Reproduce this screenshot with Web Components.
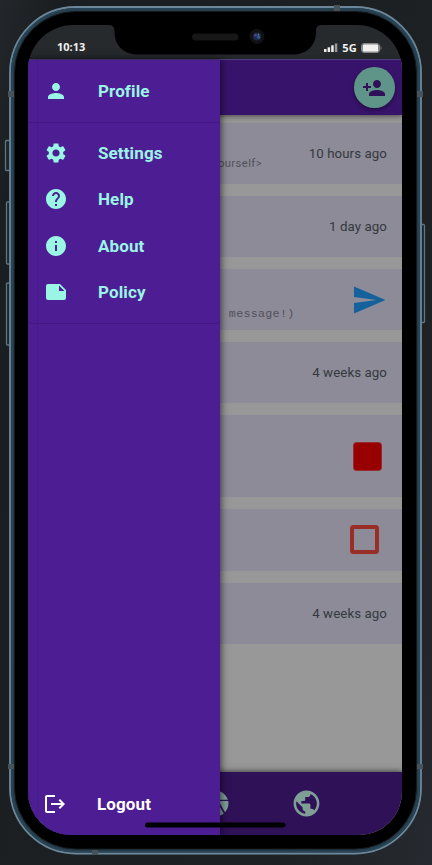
<!DOCTYPE html>
<html lang="en">
<head>
<meta charset="utf-8">
<title>Messages</title>
<style>
html,body{margin:0;width:432px;height:865px;overflow:hidden}
body{background:linear-gradient(105deg,#23272b 0,#1a1e20 9%,#1d2123 75%,#26292f 100%);font-family:Roboto,sans-serif}
</style>
</head>
<body>
<phone-frame>
  <status-bar slot="status"></status-bar>
  <app-header></app-header>
  <message-list>
    <message-row note="yourself&gt;">10 hours ago</message-row>
    <message-row>1 day ago</message-row>
    <message-row mono note="message!)"><ui-icon name="send" style="--size:36px;color:#14619c"></ui-icon></message-row>
    <message-row>4 weeks ago</message-row>
    <message-row style="--height:82px;--end:20px"><state-box filled></state-box></message-row>
    <message-row style="--end:23px;--height:62px"><state-box></state-box></message-row>
    <message-row>4 weeks ago</message-row>
  </message-list>
  <bottom-nav></bottom-nav>
  <side-drawer slot="drawer">
    <drawer-item slot="head" icon="person">Profile</drawer-item>
    <drawer-item icon="settings">Settings</drawer-item>
    <drawer-item icon="help">Help</drawer-item>
    <drawer-item icon="info">About</drawer-item>
    <drawer-item icon="note">Policy</drawer-item>
    <drawer-item slot="foot" icon="logout" style="color:#fff">Logout</drawer-item>
  </side-drawer>
</phone-frame>
<script>
const ICONS={
person:'M12 12c2.21 0 4-1.79 4-4s-1.79-4-4-4-4 1.79-4 4 1.79 4 4 4zm0 2c-2.67 0-8 1.34-8 4v2h16v-2c0-2.66-5.33-4-8-4z',
add:'M15 12c2.21 0 4-1.79 4-4s-1.79-4-4-4-4 1.79-4 4 1.79 4 4 4zm-9-2V7H4v3H1v2h3v3h2v-3h3v-2H6zm9 4c-2.67 0-8 1.34-8 4v2h16v-2c0-2.66-5.33-4-8-4z',
settings:'M19.14 12.94c.04-.3.06-.61.06-.94 0-.32-.02-.64-.07-.94l2.03-1.58c.18-.14.23-.41.12-.61l-1.92-3.32c-.12-.22-.37-.29-.59-.22l-2.39.96c-.5-.38-1.03-.7-1.62-.94l-.36-2.54c-.04-.24-.24-.41-.48-.41h-3.84c-.24 0-.43.17-.47.41l-.36 2.54c-.59.24-1.13.57-1.62.94l-2.39-.96c-.22-.08-.47 0-.59.22L2.74 8.87c-.12.21-.08.47.12.61l2.03 1.58c-.05.3-.09.63-.09.94s.02.64.07.94l-2.03 1.58c-.18.14-.23.41-.12.61l1.92 3.32c.12.22.37.29.59.22l2.39-.96c.5.38 1.03.7 1.62.94l.36 2.54c.05.24.24.41.48.41h3.84c.24 0 .44-.17.47-.41l.36-2.54c.59-.24 1.13-.56 1.62-.94l2.39.96c.22.08.47 0 .59-.22l1.92-3.32c.12-.22.07-.47-.12-.61l-2.01-1.58zM12 15.6c-1.98 0-3.6-1.62-3.6-3.6s1.62-3.6 3.6-3.6 3.6 1.62 3.6 3.6-1.62 3.6-3.6 3.6z',
help:'M12 2C6.48 2 2 6.48 2 12s4.48 10 10 10 10-4.48 10-10S17.52 2 12 2zm1 17h-2v-2h2v2zm2.07-7.75l-.9.92C13.45 12.9 13 13.5 13 15h-2v-.5c0-1.1.45-2.1 1.17-2.83l1.24-1.26c.37-.36.59-.86.59-1.41 0-1.1-.9-2-2-2s-2 .9-2 2H8c0-2.21 1.79-4 4-4s4 1.79 4 4c0 .88-.36 1.68-.93 2.25z',
info:'M12 2C6.48 2 2 6.48 2 12s4.48 10 10 10 10-4.48 10-10S17.52 2 12 2zm1 15h-2v-6h2v6zm0-8h-2V7h2v2z',
note:'M22 10l-6-6H4c-1.1 0-2 .9-2 2v12.01c0 1.1.9 1.99 2 1.99l16-.01c1.1 0 2-.89 2-1.99v-8zm-7-4.5l5.5 5.5H15V5.5z',
logout:'M17 7l-1.41 1.41L18.17 11H8v2h10.17l-2.58 2.58L17 17l5-5zM4 5h8V3H4c-1.1 0-2 .9-2 2v14c0 1.1.9 2 2 2h8v-2H4V5z',
send:'M2.01 21L23 12 2.01 3 2 10l15 2-15 2z',
globe:'M12 2C6.48 2 2 6.48 2 12s4.48 10 10 10 10-4.48 10-10S17.52 2 12 2zm-1 17.93c-3.95-.49-7-3.85-7-7.93 0-.62.08-1.21.21-1.79L9 15v1c0 1.1.9 2 2 2v1.93zm6.9-2.54c-.26-.81-1-1.39-1.9-1.39h-1v-3c0-.55-.45-1-1-1H8v-2h2c.55 0 1-.45 1-1V7h2c1.1 0 2-.9 2-2v-.41c2.93 1.19 5 4.06 5 7.41 0 2.08-.8 3.97-2.1 5.39z',
aperture:'M9.4 10.5l4.77-8.26C13.47 2.09 12.75 2 12 2c-2.4 0-4.6.85-6.32 2.25l3.66 6.35.06-.1zM21.54 9c-.92-2.92-3.15-5.26-6-6.34L11.88 9h9.66zm.26 1h-7.49l.29.5 4.76 8.25C21 16.97 22 14.61 22 12c0-.69-.07-1.35-.2-2zM8.54 12l-3.9-6.75C3.01 7.03 2 9.39 2 12c0 .69.07 1.35.2 2h7.49l-1.15-2zm-6.08 3c.92 2.92 3.15 5.26 6 6.34L12.12 15H2.46zm11.27 0l-3.9 6.76c.7.15 1.42.24 2.17.24 2.4 0 4.6-.85 6.32-2.25l-3.66-6.35-.93 1.6z'
};
function element(name,render){
  customElements.define(name,class extends HTMLElement{
    connectedCallback(){
      if(!this.shadowRoot)this.attachShadow({mode:'open'}).innerHTML=render(this);
    }
  });
}
element('ui-icon',e=>`<style>:host{display:block;flex:none;width:var(--size,24px);height:var(--size,24px)}svg{display:block;width:100%;height:100%;fill:currentColor}</style>
<svg viewBox="0 0 24 24"><path d="${ICONS[e.getAttribute('name')]}"/></svg>`);

element('phone-frame',()=>`<style>
:host{display:block;position:relative;width:432px;height:865px}
.hardware{position:absolute;inset:0}
.screen{position:absolute;left:28px;top:25px;width:374px;height:810px;border-radius:45px 45px 43px 43px;overflow:hidden;display:flex;flex-direction:column;background:#262a2d}
.app{flex:1;min-height:0;display:flex;flex-direction:column;background:#989898}
.top{position:absolute;inset:0;pointer-events:none;z-index:3}
</style>
<svg class="hardware" width="432" height="865">
<g fill="#1b252c" stroke="#5f7581" stroke-width="1.3"><rect x="5.5" y="140.5" width="5" height="30" rx="1"/><rect x="6.5" y="202" width="4" height="62" rx="1"/><rect x="6.5" y="283" width="4" height="62" rx="1"/><rect x="420" y="224.500" width="4.500" height="98" rx="1"/></g>
<rect x="9" y="6" width="413" height="848.500" rx="67" fill="#253b49"/>
<rect x="10" y="7" width="411" height="846.500" rx="66" fill="none" stroke="#6b8799" stroke-width="1.8"/>
<rect x="12" y="9" width="407" height="842.500" rx="64" fill="none" stroke="#284353" stroke-width="2"/>
<rect x="14.500" y="11.500" width="402" height="837.500" rx="61.500" fill="#000" stroke="#15191c"/>
<g fill="#46535b"><rect x="8" y="91" width="6" height="6"/><rect x="417" y="91" width="6" height="6"/><rect x="334" y="5" width="6" height="6"/><rect x="8" y="764" width="6" height="5"/><rect x="417" y="764" width="6" height="5"/><rect x="92" y="850" width="6" height="5"/></g>
</svg>
<div class="screen"><slot name="status"></slot><div class="app"><slot></slot></div><slot name="drawer"></slot></div>
<svg class="top" width="432" height="865">
<path d="M109 24H321V25Q316 25 316 31V33A21.500 21.500 0 0 1 294.500 54.500H136A21.500 21.500 0 0 1 114.500 33V31Q114.500 25 109 25Z" fill="#000"/>
<rect x="192" y="33.500" width="46.500" height="7" rx="3.500" fill="#171717"/>
<circle cx="257" cy="36.500" r="7.500" fill="#101113"/><circle cx="257" cy="36.500" r="4" fill="#20294c"/><circle cx="255.500" cy="35.300" r="1.200" fill="#5b4690"/><circle cx="258.500" cy="37" r="1.700" fill="#2f5d92"/><circle cx="258.500" cy="34.600" r=".8" fill="#5f7db3"/>
<rect x="145" y="822.500" width="140.500" height="5" rx="2.500" fill="#000"/>
</svg>`);

element('status-bar',()=>`<style>
:host{display:flex;height:34px;box-sizing:border-box;padding:10px 20px 0 29px;align-items:center;justify-content:space-between;color:#f1f1f1;font:700 11px/24px "Open Sans","Noto Sans",sans-serif}
.right{display:flex;align-items:center;gap:4px;font-size:11px;padding-top:2px}.right span{letter-spacing:.2px}svg{display:block}
</style><span>10:13</span><span class="right"><svg width="14" height="10" fill="#eee"><rect y="6" width="2.500" height="3"/><rect x="3.600" y="4.300" width="2.500" height="4.700"/><rect x="7.200" y="2.300" width="2.500" height="6.700"/><rect x="10.800" y=".5" width="2.500" height="8.500" fill="#999"/></svg><span>5G</span><svg width="21" height="10"><rect x=".5" y=".5" width="18" height="9" rx="2.500" fill="none" stroke="#858789"/><rect x="1.500" y="1.300" width="16" height="7.400" rx="1.500" fill="#f0f0f0"/><path d="M19.500 3q1 0 1 2t-1 2z" fill="#777"/></svg></span>`);

element('app-header',()=>`<style>
:host{display:flex;box-sizing:border-box;height:56px;flex:none;align-items:center;justify-content:flex-end;padding-right:7.3px;background:#38136b;border-top:1px solid #513f7e;position:relative;z-index:1;box-shadow:0 1px 4px #0006,0 3px 7px #0002}
.add{width:40.5px;height:40.500px;border-radius:50%;background:#5e9588;display:flex;align-items:center;justify-content:center;color:#2f1159;box-shadow:0 2px 4px #0006}
</style><div class="add"><ui-icon name="add"></ui-icon></div>`);

element('message-list',()=>`<style>:host{display:flex;flex:1;min-height:0;flex-direction:column;gap:11.8px;padding-top:8.2px}</style><slot></slot>`);

element('message-row',e=>{const note=e.getAttribute('note')||'',mono=e.hasAttribute('mono');return `<style>
:host{display:flex;flex:none;box-sizing:border-box;height:var(--height,61.2px);align-items:center;background:#8d8b98;padding-right:var(--end,15px);color:#34393d;font-size:13.3px;letter-spacing:.07px}
.note{align-self:flex-end;width:${mono?'266.5px':'234px'};text-align:right;white-space:nowrap;color:#51515b;font:${mono?'11.7px/16px "Liberation Mono",monospace':'11.3px/16px Roboto,sans-serif'};letter-spacing:${mono?'.28px':'.4px'};margin-bottom:${mono?'8px':'12px'}}
.end{margin-left:auto;white-space:nowrap}
</style><span class="note">${note.replace(/</g,'&lt;')}</span><span class="end"><slot></slot></span>`});

element('state-box',e=>`<style>:host{display:block;box-sizing:border-box;width:29px;height:29px;border-radius:3.5px;${e.hasAttribute('filled')?'background:#980000;border:.5px solid #982b31':'border:4px solid #982e25'}}</style>`);

element('bottom-nav',()=>`<style>
:host{display:flex;flex:none;height:63px;background:#2f1158;box-shadow:0 -1px 4px #0006,0 -3px 7px #0002;color:#7e9e96;position:relative;padding-left:171.5px;gap:60.500px;box-sizing:border-box}
ui-icon{--size:31px;margin-top:16px}
</style><ui-icon name="aperture"></ui-icon><ui-icon name="globe"></ui-icon>`);

element('side-drawer',()=>`<style>
:host{position:absolute;left:0;top:35px;bottom:0;width:192px;z-index:2;display:flex;flex-direction:column;background:linear-gradient(90deg,transparent 0 9px,#43198588 9px 10px,transparent 10px),#4d1d94;box-shadow:0 0 10px #0006,2px 0 4px #0004;color:#9bf5e5}
.head{height:62.5px;box-sizing:border-box;border-bottom:1px solid #421882;padding-top:8px}
.body{height:201px;box-sizing:border-box;border-bottom:1px solid #421882;border-radius:0 0 4px 4px;padding-top:7.5px}
.foot{margin-top:auto;padding-bottom:7.5px;margin-left:-1px}
</style><div class="head"><slot name="head"></slot></div><div class="body"><slot></slot></div><div class="foot"><slot name="foot"></slot></div>`);

element('drawer-item',e=>`<style>
:host{display:flex;height:46.3px;align-items:center;padding-left:15.6px;gap:30.4px;font-weight:700;font-size:17px;letter-spacing:.12px}
ui-icon{--size:24px}
</style><ui-icon name="${e.getAttribute('icon')}"></ui-icon><span><slot></slot></span>`);
</script>
</body>
</html>
